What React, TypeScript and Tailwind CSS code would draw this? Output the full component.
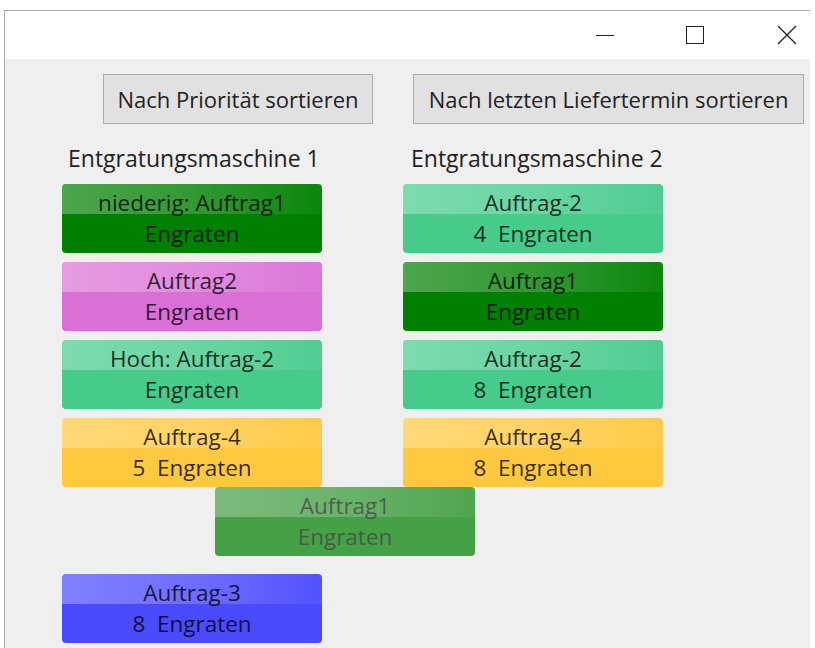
import React from "react";

type Job = {
  title: string;
  sub: string;
  color: string;
};

const col1: (Job | null)[] = [
  { title: "niederig: Auftrag1", sub: "Engraten", color: "bg-[#008000]" },
  { title: "Auftrag2", sub: "Engraten", color: "bg-[#da70d6]" },
  { title: "Hoch: Auftrag-2", sub: "Engraten", color: "bg-[#46cb8b]" },
  { title: "Auftrag-4", sub: "5  Engraten", color: "bg-[#ffc93f]" },
  null,
  { title: "Auftrag-3", sub: "8  Engraten", color: "bg-[#4a4aff]" },
];

const col2: Job[] = [
  { title: "Auftrag-2", sub: "4  Engraten", color: "bg-[#46cb8b]" },
  { title: "Auftrag1", sub: "Engraten", color: "bg-[#008000]" },
  { title: "Auftrag-2", sub: "8  Engraten", color: "bg-[#46cb8b]" },
  { title: "Auftrag-4", sub: "8  Engraten", color: "bg-[#ffc93f]" },
];

function JobCard({ job }: { job: Job }) {
  return (
    <div
      className={`relative h-[69px] w-[260px] overflow-hidden rounded-[4px] ${job.color}`}
    >
      <div className="absolute inset-x-0 top-0 h-[30px] bg-gradient-to-r from-white/30 via-white/20 to-white/5" />
      <div className="relative flex flex-col items-center pt-[6px] text-[22.5px] leading-[26px] text-black/80 whitespace-pre">
        <span>{job.title}</span>
        <span className="mt-[5px]">{job.sub}</span>
      </div>
    </div>
  );
}

function SortButton({ text, width }: { text: string; width: string }) {
  return (
    <button
      className={`h-[50px] ${width} border border-[#adadad] bg-[#e1e1e1] text-[22px] text-[#222]`}
    >
      {text}
    </button>
  );
}

export default function App() {
  return (
    <div
      className="relative h-[648px] w-[815px] overflow-hidden bg-white pt-[10px] pl-[4px]"
      style={{ fontFamily: '"Open Sans", "Noto Sans", sans-serif' }}
    >
      <div className="h-full w-[806px] border-l border-t border-[#ababab]">
        {/* title bar */}
        <div className="flex h-[48px] items-center justify-end bg-white">
          <div className="flex w-[46px] justify-center">
            <div className="h-px w-[18px] bg-[#222]" />
          </div>
          <div className="ml-[44px] flex w-[46px] justify-center">
            <div className="h-[18px] w-[18px] border-[1.5px] border-[#222]" />
          </div>
          <div className="ml-[46px] flex w-[46px] justify-center">
            <svg width="20" height="20" viewBox="0 0 20 20">
              <path d="M1 1L19 19M19 1L1 19" stroke="#222" strokeWidth="1.3" />
            </svg>
          </div>
        </div>

        {/* content */}
        <div className="h-full bg-[#efefef] pt-[15px]">
          <div className="flex">
            <div className="ml-[98px]">
              <SortButton text="Nach Priorität sortieren" width="w-[270px]" />
            </div>
            <div className="ml-[40px]">
              <SortButton
                text="Nach letzten Liefertermin sortieren"
                width="w-[391px]"
              />
            </div>
          </div>

          <div className="mt-[17px] flex">
            <div className="ml-[57px] w-[260px]">
              <div className="h-[34px] pl-[6px] text-[23px] leading-[34px] whitespace-nowrap text-[#222]">
                Entgratungsmaschine 1
              </div>
              <div className="mt-[9px] flex flex-col gap-[9px]">
                {col1.map((job, i) =>
                  job ? (
                    <JobCard key={i} job={job} />
                  ) : (
                    <div key={i} className="h-[69px]" />
                  )
                )}
              </div>
            </div>
            <div className="ml-[81px] w-[260px]">
              <div className="h-[34px] pl-[8px] text-[23px] leading-[34px] whitespace-nowrap text-[#222]">
                Entgratungsmaschine 2
              </div>
              <div className="mt-[9px] flex flex-col gap-[9px]">
                {col2.map((job, i) => (
                  <JobCard key={i} job={job} />
                ))}
              </div>
            </div>
          </div>
        </div>
      </div>

      {/* drag adorner */}
      <div className="absolute left-[215px] top-[487px] opacity-70">
        <JobCard
          job={{ title: "Auftrag1", sub: "Engraten", color: "bg-[#008000]" }}
        />
      </div>
    </div>
  );
}
